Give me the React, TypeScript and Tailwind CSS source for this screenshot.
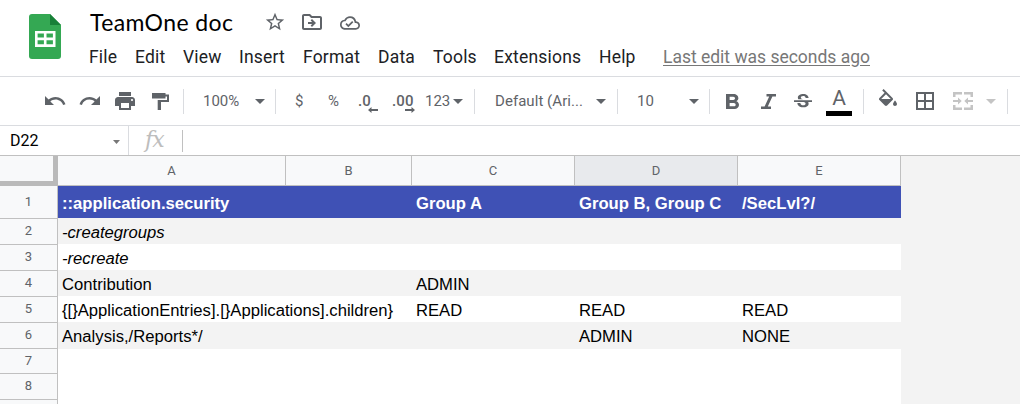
import type { ReactNode } from "react";
import { MdUndo, MdRedo, MdPrint, MdBorderAll, MdStrikethroughS, MdStarBorder, MdOutlineDriveFileMove, MdOutlineCloudDone } from "react-icons/md";

const menus = [
  { label: "File", cls: "w-[46px]" },
  { label: "Edit", cls: "w-[48px]" },
  { label: "View", cls: "w-[56px]" },
  { label: "Insert", cls: "w-[64px]" },
  { label: "Format", cls: "w-[75px]" },
  { label: "Data", cls: "w-[55px]" },
  { label: "Tools", cls: "w-[61px]" },
  { label: "Extensions", cls: "w-[105px]" },
  { label: "Help", cls: "w-[64px]" },
];

const columns = [
  { name: "A", cls: "w-[228px]" },
  { name: "B", cls: "w-[126px]" },
  { name: "C", cls: "w-[163px]" },
  { name: "D", cls: "w-[163px]" },
  { name: "E", cls: "w-[163px]" },
];

const rows = [
  ["::application.security", "", "Group A", "Group B, Group C", "/SecLvl?/"],
  ["-creategroups", "", "", "", ""],
  ["-recreate", "", "", "", ""],
  ["Contribution", "", "ADMIN", "", ""],
  ["{[}ApplicationEntries].[}Applications].children}", "", "READ", "READ", "READ"],
  ["Analysis,/Reports*/", "", "", "ADMIN", "NONE"],
  ["", "", "", "", ""],
  ["", "", "", "", ""],
  ["", "", "", "", ""],
];

function rowStyle(i: number) {
  if (i === 0) return "h-8 bg-[#3f51b5] font-bold text-white";
  if (i === 1) return "h-[26px] bg-[#f3f3f3] italic";
  if (i === 2) return "h-[26px] bg-white italic";
  if (i === 3) return "h-[26px] bg-[#f3f3f3]";
  if (i === 5) return "h-[27px] bg-[#f3f3f3]";
  if (i === 6) return "h-[25px] bg-white";
  return "h-[26px] bg-white";
}

function cellPadding(i: number) {
  if (i === 0) return "pb-[3px]";
  if (i === 5) return "pb-px";
  return "pb-0";
}

function Slot({ cls, children }: { cls: string; children: ReactNode }) {
  return <div className={`flex shrink-0 items-center ${cls}`}>{children}</div>;
}

function Caret({ cls = "fill-[#5f6368]" }: { cls?: string }) {
  return (
    <svg className={`h-[5px] w-[10px] ${cls}`} viewBox="0 0 10 5">
      <path d="M0 0h10L5 5z" />
    </svg>
  );
}

function Divider() {
  return <div className="h-[25px] w-px shrink-0 bg-[#dadce0]" />;
}

function SheetsLogo() {
  return (
    <svg className="h-[45px] w-8" viewBox="0 0 32 45">
      <path fill="#34a853" d="M3 0h18l11 11v31a3 3 0 0 1-3 3H3a3 3 0 0 1-3-3V3a3 3 0 0 1 3-3z" />
      <path fill="#188038" d="M21 0l11 11H21z" />
      <path fill="#fff" fillRule="evenodd" d="M6 17h20.500v16H6zM8.600 19.600v4h6.300v-4zM17.500 19.600v4h6.400v-4zM8.600 26.300v4h6.300v-4zM17.500 26.300v4h6.400v-4z" />
    </svg>
  );
}

export default function App() {
  return (
    <div className="flex h-[404px] w-[1020px] flex-col overflow-hidden bg-white font-['Roboto',sans-serif]">
      <header className="flex h-[77px] shrink-0 border-b border-[#dadce0]">
        <div className="w-[89px] shrink-0 pt-[14px] pl-[29px]">
          <SheetsLogo />
        </div>
        <div className="flex flex-col">
          <div className="flex h-[45px] items-center text-[#5f6368]">
            <div className="w-[175px] pl-px font-['Lato',sans-serif] text-[23px] tracking-[0.4px] whitespace-nowrap text-black">TeamOne doc</div>
            <Slot cls="w-[36px] pb-px"><MdStarBorder size={22} /></Slot>
            <Slot cls="w-[40px] pb-px"><MdOutlineDriveFileMove size={24} /></Slot>
            <Slot cls="w-[30px]"><MdOutlineCloudDone size={20} /></Slot>
          </div>
          <nav className="flex h-[24px] items-center text-[17.5px] tracking-[0.2px] whitespace-nowrap text-[#202124]">
            {menus.map((m) => (
              <div key={m.label} className={m.cls}>{m.label}</div>
            ))}
            <div className="tracking-[-0.01px] text-[#777] underline underline-offset-2">Last edit was seconds ago</div>
          </nav>
        </div>
      </header>

      <div className="flex h-[49px] shrink-0 items-center border-b border-[#dadce0] pl-[43px] text-[15px] text-[#5f6368]">
        <Slot cls="w-[35px]"><MdUndo size={24} /></Slot>
        <Slot cls="w-[35px]"><MdRedo size={24} /></Slot>
        <Slot cls="w-[39px]"><MdPrint size={24} /></Slot>
        <Slot cls="w-[31px]">
          <svg className="h-[17px] w-[17px] fill-current" viewBox="0 0 17 17">
            <path d="M0 0h13.500v1.500H17V9H9v8H5.700V7H15V3.500h-1.500V5.500H0z" />
          </svg>
        </Slot>
        <Divider />
        <Slot cls="w-[71px] pl-[19px]">100%</Slot>
        <Slot cls="w-[20px]"><Caret /></Slot>
        <Divider />
        <Slot cls="w-[52px] pl-[19px]">$</Slot>
        <Slot cls="w-[30px]">%</Slot>
        <Slot cls="w-[34px]">
          <div className="relative font-medium tracking-[0.2px]">.0
            <svg className="absolute top-[17px] left-[10px] h-[6px] w-[10px] fill-current" viewBox="0 0 10 6"><path d="M0 3l3.500-3v2H10v2H3.500v2z" /></svg>
          </div>
        </Slot>
        <Slot cls="w-[33px]">
          <div className="relative font-medium tracking-[0.2px]">.00
            <svg className="absolute top-[17px] left-[13px] h-[6px] w-[10px] fill-current" viewBox="0 0 10 6"><path d="M10 3L6.500 0v2H0v2h6.500v2z" /></svg>
          </div>
        </Slot>
        <Slot cls="w-[28px]">123</Slot>
        <Slot cls="w-[21px]"><Caret /></Slot>
        <Divider />
        <Slot cls="w-[121px] pl-[20px] tracking-[0.05px] whitespace-nowrap">Default (Ari...</Slot>
        <Slot cls="w-[21px]"><Caret /></Slot>
        <Divider />
        <Slot cls="w-[71px] pl-[19px]">10</Slot>
        <Slot cls="w-[20px]"><Caret /></Slot>
        <Divider />
        <Slot cls="w-[51px] pl-[16px]">
          <svg className="h-[15px] w-[13px] fill-current" viewBox="7 4 10.750 14" preserveAspectRatio="none">
            <path d="M15.600 10.790c.97-.67 1.650-1.770 1.650-2.790 0-2.260-1.750-4-4-4H7v14h7.040c2.090 0 3.710-1.700 3.710-3.790 0-1.520-.86-2.820-2.150-3.420zM10 6.500h3c.83 0 1.500.67 1.500 1.500s-.67 1.500-1.500 1.500h-3v-3zm3.500 9H10v-3h3.500c.83 0 1.500.67 1.500 1.500s-.67 1.500-1.500 1.500z" />
          </svg>
        </Slot>
        <Slot cls="w-[33px]">
          <svg className="h-[15px] w-[15px] fill-current" viewBox="0 0 15 15">
            <path d="M5.500 0H15v2.600h-3.600L6.800 12.400H10V15H0v-2.600h3.600L8.200 2.600H5.500z" />
          </svg>
        </Slot>
        <Slot cls="w-[32px] pt-[2px]"><MdStrikethroughS className="h-[16px] w-[18px]" viewBox="3 3 18 18" preserveAspectRatio="none" /></Slot>
        <div className="flex w-[37px] shrink-0 flex-col pt-px">
          <div className="h-[23px] w-[26px] text-center text-[21px] leading-[20px]">A</div>
          <div className="h-[5px] w-[26px] bg-black" />
        </div>
        <Divider />
        <Slot cls="w-[48px] pl-[12px]">
          <svg className="h-[24px] w-[24px] fill-current" viewBox="0 0 24 24">
            <path d="M16.560 8.940L7.620 0 6.210 1.410l2.380 2.380-5.150 5.150c-.59.59-.59 1.540 0 2.120l5.500 5.500c.29.29.68.44 1.060.44s.77-.15 1.060-.44l5.500-5.500c.59-.58.59-1.530 0-2.120zM5.210 10L10 5.210 14.790 10H5.210zM19 11.500s-2 2.170-2 3.500c0 1.100.9 2 2 2s2-.9 2-2c0-1.330-2-3.500-2-3.500z" />
          </svg>
        </Slot>
        <Slot cls="w-[41px] pl-px"><MdBorderAll size={24} /></Slot>
        <Slot cls="w-[33px]">
          <svg className="h-[18px] w-[20px] fill-[#c4c4c4]" viewBox="0 0 20 18">
            <path d="M0 0h9v2.500H2.500V5H0zM11 0h9v5h-2.500V2.500H11zM0 13h2.500v2.500H9V18H0zM17.500 13H20v5h-9v-2.500h6.500zM0 8h5V5.500L8.700 9 5 12.500V10H0zM20 8h-5V5.500L11.300 9l3.700 3.500V10h5z" />
          </svg>
        </Slot>
        <Slot cls="w-[21px]"><Caret cls="fill-[#c4c4c4]" /></Slot>
        <Divider />
      </div>

      <div className="flex h-[30px] shrink-0 items-center border-b border-[#c0c0c0]">
        <div className="w-[113px] pl-[10px] text-[16px] text-black">D22</div>
        <svg className="mt-[3px] h-[4px] w-[7px] fill-[#777]" viewBox="0 0 7 4"><path d="M0 0h7L3.500 4z" /></svg>
        <div className="ml-[8px] h-[29px] w-px bg-[#dadce0]" />
        <div className="w-[53px] pb-px pl-[16px] font-['DejaVu_Serif',serif] text-[22px] leading-[26px] tracking-[-1px] text-[#bdbdbd] italic">fx</div>
        <div className="h-[22px] w-px bg-[#c0c0c0]" />
      </div>

      <main className="flex flex-1 flex-col bg-[#f3f3f3]">
        <div className="flex h-[30px] w-[901px] shrink-0 text-[13px] text-[#5f6368]">
          <div className="w-[58px] border-r-[5px] border-b-[5px] border-[#bababa] bg-[#f8f9fa]" />
          {columns.map((c) => (
            <div key={c.name} className={`flex items-center justify-center border-r border-b border-[#c0c0c0] ${c.name === "D" ? "bg-[#e8eaed]" : "bg-[#f8f9fa]"} ${c.cls}`}>
              {c.name}
            </div>
          ))}
        </div>
        {rows.map((cells, i) => (
          <div key={i} className={`flex w-[901px] shrink-0 ${rowStyle(i)}`}>
            <div className="w-[58px] border-r border-[#c0c0c0] bg-[#f8f9fa]">
              <div className={`flex items-center justify-center text-[13px] font-normal text-[#5f6368] not-italic ${i === 0 ? "h-[33px] pb-px" : "h-[27px] border-t border-[#c0c0c0] pb-[2px]"} ${i > 5 ? "-mt-px" : ""}`}>{i < 8 ? i + 1 : ""}</div>
            </div>
            {cells.map((cell, j) => (
              <div key={j} className={`flex items-end pl-[4px] font-['Liberation_Sans',sans-serif] text-[16.650px] leading-[22px] whitespace-nowrap ${cellPadding(i)} ${columns[j].cls}`}>{cell}</div>
            ))}
          </div>
        ))}
      </main>
    </div>
  );
}
